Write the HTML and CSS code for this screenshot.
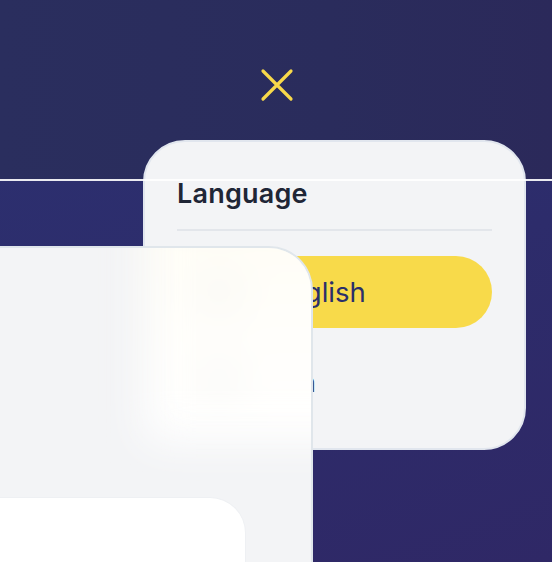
FILE: index.html
```html
<!DOCTYPE html>
<html lang="en">
<head>
<meta charset="utf-8">
<title>Language</title>
<link rel="stylesheet" href="styles.css">
</head>
<body>
  <header class="topbar">
    <button class="close" aria-label="Close">
      <svg width="34" height="34" viewBox="0 0 34 34" fill="none">
        <path d="M3 3 L31 31 M31 3 L3 31" stroke="#f8d94a" stroke-width="3.2" stroke-linecap="round"/>
      </svg>
    </button>
  </header>
  <div class="rule"></div>

  <section class="lang-card">
    <h2 class="lang-title">Language</h2>
    <div class="lang-divider"></div>
    <ul class="lang-list">
      <li class="lang-option is-active"><span class="flag"></span><span class="lang-name">English</span></li>
      <li class="lang-option"><span class="flag"></span><span class="lang-name">Oin</span></li>
    </ul>
  </section>

  <section class="sheet">
    <div class="fog">
      <span class="fog-dot dot-1"></span>
      <span class="fog-dot dot-2"></span>
    </div>
    <div class="sheet-card"></div>
  </section>
</body>
</html>
```
FILE: styles.css
```css
* { box-sizing: border-box; }

html, body {
  margin: 0;
  padding: 0;
}

body {
  width: 552px;
  height: 562px;
  overflow: hidden;
  position: relative;
  font-family: Inter, "Noto Sans", "Liberation Sans", sans-serif;
  background: linear-gradient(160deg, #2c3171 0%, #2d2c6b 55%, #2f2866 100%);
}

.topbar {
  height: 180px;
  display: flex;
  align-items: center;
  justify-content: center;
  padding-bottom: 10px;
  background: linear-gradient(90deg, #2a2e5e 0%, #2a2c5c 60%, #2b295a 100%);
}

.close {
  border: 0;
  background: none;
  padding: 0;
  margin-left: 2px;
  display: flex;
  cursor: pointer;
}

.rule {
  position: absolute;
  left: 0;
  right: 0;
  top: 179px;
  height: 2px;
  background: rgba(255, 255, 255, 0.9);
  z-index: 3;
}

.lang-card {
  position: absolute;
  left: 143px;
  top: 140px;
  width: 383px;
  height: 310px;
  border: 2px solid #e1e6ee;
  border-radius: 42px;
  background: #f3f4f6;
  padding: 36px 32px 30px;
  z-index: 2;
}

.lang-title {
  margin: 0;
  font-size: 27px;
  line-height: 32px;
  font-weight: 600;
  color: #1f2636;
  letter-spacing: 0.2px;
}

.lang-divider {
  height: 2px;
  margin-top: 19px;
  background: #e3e6eb;
}

.lang-list {
  list-style: none;
  margin: 25px 0 0;
  padding: 0;
  display: flex;
  flex-direction: column;
  gap: 18px;
}

.lang-option {
  height: 72px;
  border-radius: 36px;
  display: flex;
  align-items: center;
  gap: 39px;
  padding-left: 26px;
  font-size: 27.5px;
  color: #3a4150;
}

.lang-option.is-active {
  background: #f8da4a;
  color: #2b2f6b;
}

.flag {
  width: 30px;
  height: 30px;
  border-radius: 50%;
  flex: none;
  background: #d9dce3;
}

.sheet {
  position: absolute;
  left: -40px;
  top: 246px;
  width: 353px;
  height: 316px;
  border: 2px solid #e0e6eb;
  border-bottom: 0;
  border-radius: 0 44px 0 0;
  background: #f3f4f6;
  overflow: hidden;
  padding: 249px 65px 0 0;
  z-index: 4;
}

.fog {
  position: absolute;
  left: 182px;
  top: -50px;
  width: 260px;
  height: 245px;
  background: linear-gradient(180deg, #fffdf4 0%, #fffefa 45%, #ffffff 100%);
  filter: blur(22px);
}

.fog-dot {
  position: absolute;
  width: 34px;
  height: 34px;
  border-radius: 50%;
  background: #f4f4f1;
  filter: blur(6px);
}

.dot-1 { left: 58px; top: 78px; }
.dot-2 { left: 58px; top: 166px; }

.sheet-card {
  height: 65px;
  background: #ffffff;
  border: 1px solid #eef0f3;
  border-left: 0;
  border-bottom: 0;
  border-radius: 0 36px 0 0;
}
```
